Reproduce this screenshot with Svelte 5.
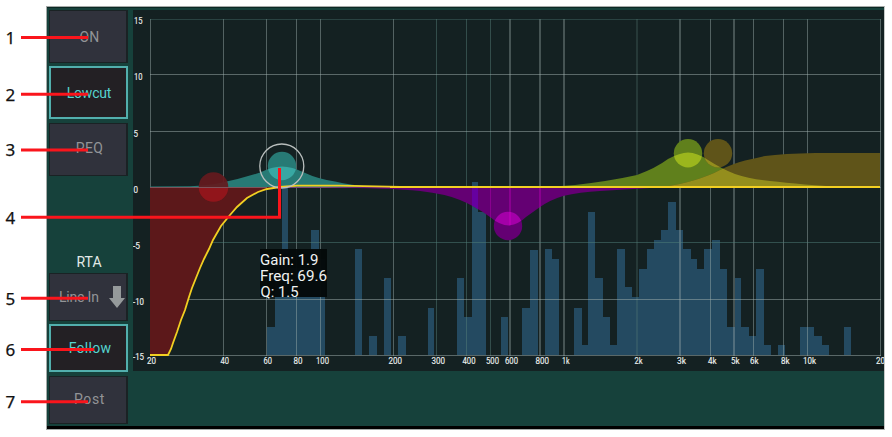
<script>
  const gridX = [[150,1],[223,1],[266,1],[296,1],[320,1],[393,1],[436,1],[466,1],[490,1],[509,2],[539,2],[563,2],[636,2],[679,2],[710,1],[733,2],[753,1],[783,1],[807,1],[880,1]];
  const faint = [436, 466, 490, 636];
  const gridY = [19, 74, 131, 187, 242, 299, 355];
  const bars = [
    [267,275,327],[275,282,270],[282,288,182],[288,311,268],[311,319,230],[319,325,259],
    [355,362,249],[369,377,336],[384,391,278],[398,406,336],[428,434,308],[457,464,278],[464,472,317],[472,478,182],[478,486,212],
    [501,508,317],[522,530,308],[530,537.5,249.5],[545,552,249],[552,559,259],[574,582,308],[582,588,345],[588,595,212],[595,603,278],
    [603,610,317],[610,617,345],[617,625,249],[625,632,287],[632,639,297],[639,647,269],[647,654,249],[654,661,240],[661,668,230],
    [668,676,202],[676,683,230],[683,691,249],[691,697,259],[697,704,269],[704,712,249],[712,720,240],[720,727,269],[727,735,327],
    [735,741,278],[741,749,327],[749,756,336],[756,764,269],[764,771,345],[778,785,345],[800,814,327],[814,822,336],[822,829,345],[844,851,327]
  ];
  const freqs = [['20',147,9],['40',220.5,8.5],['60',263.5,8.5],['80',293.5,9],['100',316,13],['200',388.5,13.5],['300',431.5,13.5],['400',462.5,13],['500',486,13],['600',505,13],['800',535.5,13.5],['1k',562,7.5],['2k',634.5,8],['3k',677,9],['4k',708,8.5],['5k',731,8.5],['6k',750,8.5],['8k',781,8.5],['10k',803,13],['20',876,9]];
  const gains = [['15',134,8.5,24],['10',134,8.5,80],['5',133.5,4.5,136.5],['0',133.5,4.5,193],['-5',133,7,249],['-10',133,11,304.5],['-15',133,11,360]];
  const callouts = [[37.5,88],[94.3,88],[150,88],[217.3,281],[298.3,88],[349.5,94],[401.8,88]];

  const teal = 'M150 188V186.4L190 186.2Q208 185.5 220 183Q240 179 260 172.5Q272 166.5 282 166.5Q292 166.5 304 172.5Q318 179 335 181.5Q350 185 375 187V188Z';
  const magenta = 'M325 187.5Q390 188 420 191Q446 194 460 200Q475 206 490 217Q500 225.5 509 225.5Q519 224 526 217Q533 212 540 207Q550 200 563 196Q580 192 600 191L650 188V187Z';
  const green = 'M540 187.5L575 185Q610 181 637 175Q656 168 668 159Q680 152.5 688 152.5Q697 152.5 708 160Q722 169 735 174Q750 179 770 181Q800 184.5 850 187.5Z';
  const gold = 'M660 187.5Q682 184 695 180Q711 175 720 170Q733 163.5 745 160.5Q757 158 765 156Q783 153.5 815 153H880V187.5Z';
  const lowcut = 'M150 355H168L171 349L173 343L177 332L181 320L185 310L189 297L192 288L196 278L200 268L204 259L209 249L213 240L221 226L230 215L237 207L247 198L258 192L267 189L280 187';
</script>

{#snippet label(text, x, width, y)}
  <text {x} {y} textLength={width} lengthAdjust="spacingAndGlyphs">{text}</text>
{/snippet}

<main>
  <section class="panel">
    <aside>
      <button>ON</button>
      <button class="active">Lowcut</button>
      <button>PEQ</button>
      <div class="heading">RTA</div>
      <button class="short source"><span>Line In</span>
        <svg width="16" height="24" viewBox="0 0 16 24"><path d="M4 1h8v12h4L8 23L0 13h4Z" fill="#959a9b" /></svg>
      </button>
      <button class="short active">Follow</button>
      <button class="short">Post</button>
    </aside>
    <svg class="graph" width="751" height="361" viewBox="133 10 751 361">
      <defs>
        <clipPath id="teal-area"><path d={teal} /></clipPath>
        <clipPath id="magenta-area"><path d={magenta} /></clipPath>
        <clipPath id="green-area"><path d={green} /></clipPath>
        <clipPath id="red-area"><rect x="150" y="187" width="100" height="168" /></clipPath>
      </defs>
      <rect x="133" y="10" width="751" height="361" fill="#142122" />
      <g shape-rendering="crispEdges">
        {#each bars as [x1, x2, y]}
          <rect x={x1} {y} width={x2 - x1} height={355 - y} fill="#244a61" />
        {/each}
        {#each gridX as [x, w]}
          <rect {x} y="19" width={w} height="337" fill={faint.includes(x) ? '#5a827c' : '#a0b0ae'} opacity={x === 636 ? 0.25 : w === 2 ? 0.36 : 0.46} />
        {/each}
        {#each gridY as y}
          <rect x="150" {y} width="731" height="1" fill={y === 242 || y === 19 ? '#50807a' : '#a0b0ae'} opacity={y === 19 ? 0.35 : 0.5} />
        {/each}
      </g>

      <path d={teal} fill="#277a75" />
      <circle cx="282" cy="166" r="14.2" fill="#277a75" />
      <circle cx="282" cy="166" r="14.2" fill="#38a8a3" clip-path="url(#teal-area)" />
      <path d="{lowcut}V187H150Z" fill="#5c181a" />
      <circle cx="213.5" cy="187" r="14.8" fill="#641a1e" fill-opacity=".93" />
      <circle cx="213.5" cy="187" r="14.8" fill="#91151b" clip-path="url(#red-area)" />
      <rect x="150" y="187" width="117" height="1" fill="#80535a" />
      <rect x="280" y="187" width="110" height="1" fill="#74447d" />

      <path d={magenta} fill="#640073" />
      <circle cx="508" cy="226" r="14.2" fill="#640073" />
      <g clip-path="url(#magenta-area)">
        <rect x="472" y="182" width="6" height="50" fill="#6600a0" />
        <circle cx="508" cy="226" r="14.2" fill="#a300a8" />
        {#each [490, 509, 539] as x}
          <rect {x} y="187" width={x === 490 ? 1 : 2} height="50" fill="#e000d0" opacity=".3" />
        {/each}
      </g>

      <path d={green} fill="#60801c" />
      <circle cx="688" cy="153.3" r="14.2" fill="#60801c" />
      <path d={gold} fill="#5f5419" />
      <circle cx="718" cy="153.3" r="14.2" fill="#5f5419" />
      <g clip-path="url(#green-area)">
        <path d={gold} fill="#948e1d" />
        <circle cx="718" cy="153.3" r="14.2" fill="#948e1d" />
        <circle cx="688" cy="153.3" r="14.2" fill="#9bb61d" />
      </g>

      <path d="{lowcut}L297 185.6H340L400 186.8" fill="none" stroke="#f2cf22" stroke-width="1.8" />
      <rect x="390" y="186" width="490" height="2" fill="#f2cf22" />
      <circle cx="281.8" cy="166" r="22" fill="none" stroke="#b9bebd" stroke-width="1.3" />

      <rect x="260" y="249" width="67" height="48" fill="#040909" fill-opacity=".97" />
      <g class="readout">
        {@render label('Gain: 1.9', 260, 58.5, 265)}
        {@render label('Freq: 69.6', 260, 67, 281)}
        {@render label('Q: 1.5', 260.5, 38, 297)}
      </g>
      <g class="axis">
        {#each freqs as [text, x, w]}{@render label(text, x, w, 363.7)}{/each}
        {#each gains as [text, x, w, y]}{@render label(text, x, w, y)}{/each}
      </g>
    </svg>
  </section>

  <svg class="callouts" width="892" height="437" viewBox="0 0 892 437">
    {#each callouts as [y, end], i}
      <path d="M21 {y}H{end}" />
      <text x="5.5" y={y + 6.2}>{i + 1}</text>
    {/each}
    <path d="M279.5 217V168" />
  </svg>
</main>

<style>
  :global(body) { margin: 0; background: #fff; }
  main { position: relative; box-sizing: border-box; width: 892px; height: 437px; padding: 6px 0 0 46px; background: #fff; overflow: hidden; }
  .panel {
    box-sizing: border-box;
    width: 839px;
    height: 424px;
    display: flex;
    border: 1px solid #a5aaa8;
    border-right-color: #c5c9c7;
    background: linear-gradient(#0b2824 0 1px, #16413b 1px 419px, #000 419px);
  }
  aside { width: 86px; box-sizing: border-box; padding: 3px 0 0 2px; display: flex; flex-direction: column; }
  button {
    box-sizing: border-box;
    width: 79px;
    height: 53px;
    flex: none;
    display: flex;
    align-items: center;
    justify-content: center;
    margin: 0 0 3px;
    padding: 0 0 0 3px;
    border: 1px solid #1a2224;
    border-right-width: 2px;
    border-radius: 0;
    background: #30323c;
    color: #929497;
    font: 14px Roboto, sans-serif;
    letter-spacing: .3px;
  }
  button:nth-child(2) { margin-bottom: 4px; padding: 0 0 0 1px; letter-spacing: -.2px; }
  button:nth-child(3) { padding-bottom: 3px; }
  .active { border: 2px solid #52afad; background: #232024; color: #56d3cf; }
  .short { height: 48px; margin-bottom: 3px; padding-bottom: 1px; }
  .short.active { margin-bottom: 4px; }
  .short:last-child { letter-spacing: .6px; padding-bottom: 2px; }
  .source { padding: 0 1px 0 9px; justify-content: space-between; letter-spacing: -.2px; }
  .heading { height: 94px; display: flex; align-items: flex-end; justify-content: center; box-sizing: border-box; padding: 0 4px 3px 0; color: #e2eae8; font: 14px Roboto, sans-serif; }
  .graph { display: block; flex: none; margin-top: 3px; }
  .readout { font: 15.5px Roboto, sans-serif; fill: #f0f2f2; }
  .axis { font: 9.5px Roboto, sans-serif; fill: #eef2f0; stroke: #eef2f0; stroke-width: .15; }
  .callouts { position: absolute; inset: 0; pointer-events: none; }
  .callouts path { fill: none; stroke: #fa151c; stroke-width: 3; }
  .callouts text { font: 17px "Noto Sans", sans-serif; fill: #111; stroke: #111; stroke-width: .25; }
</style>
